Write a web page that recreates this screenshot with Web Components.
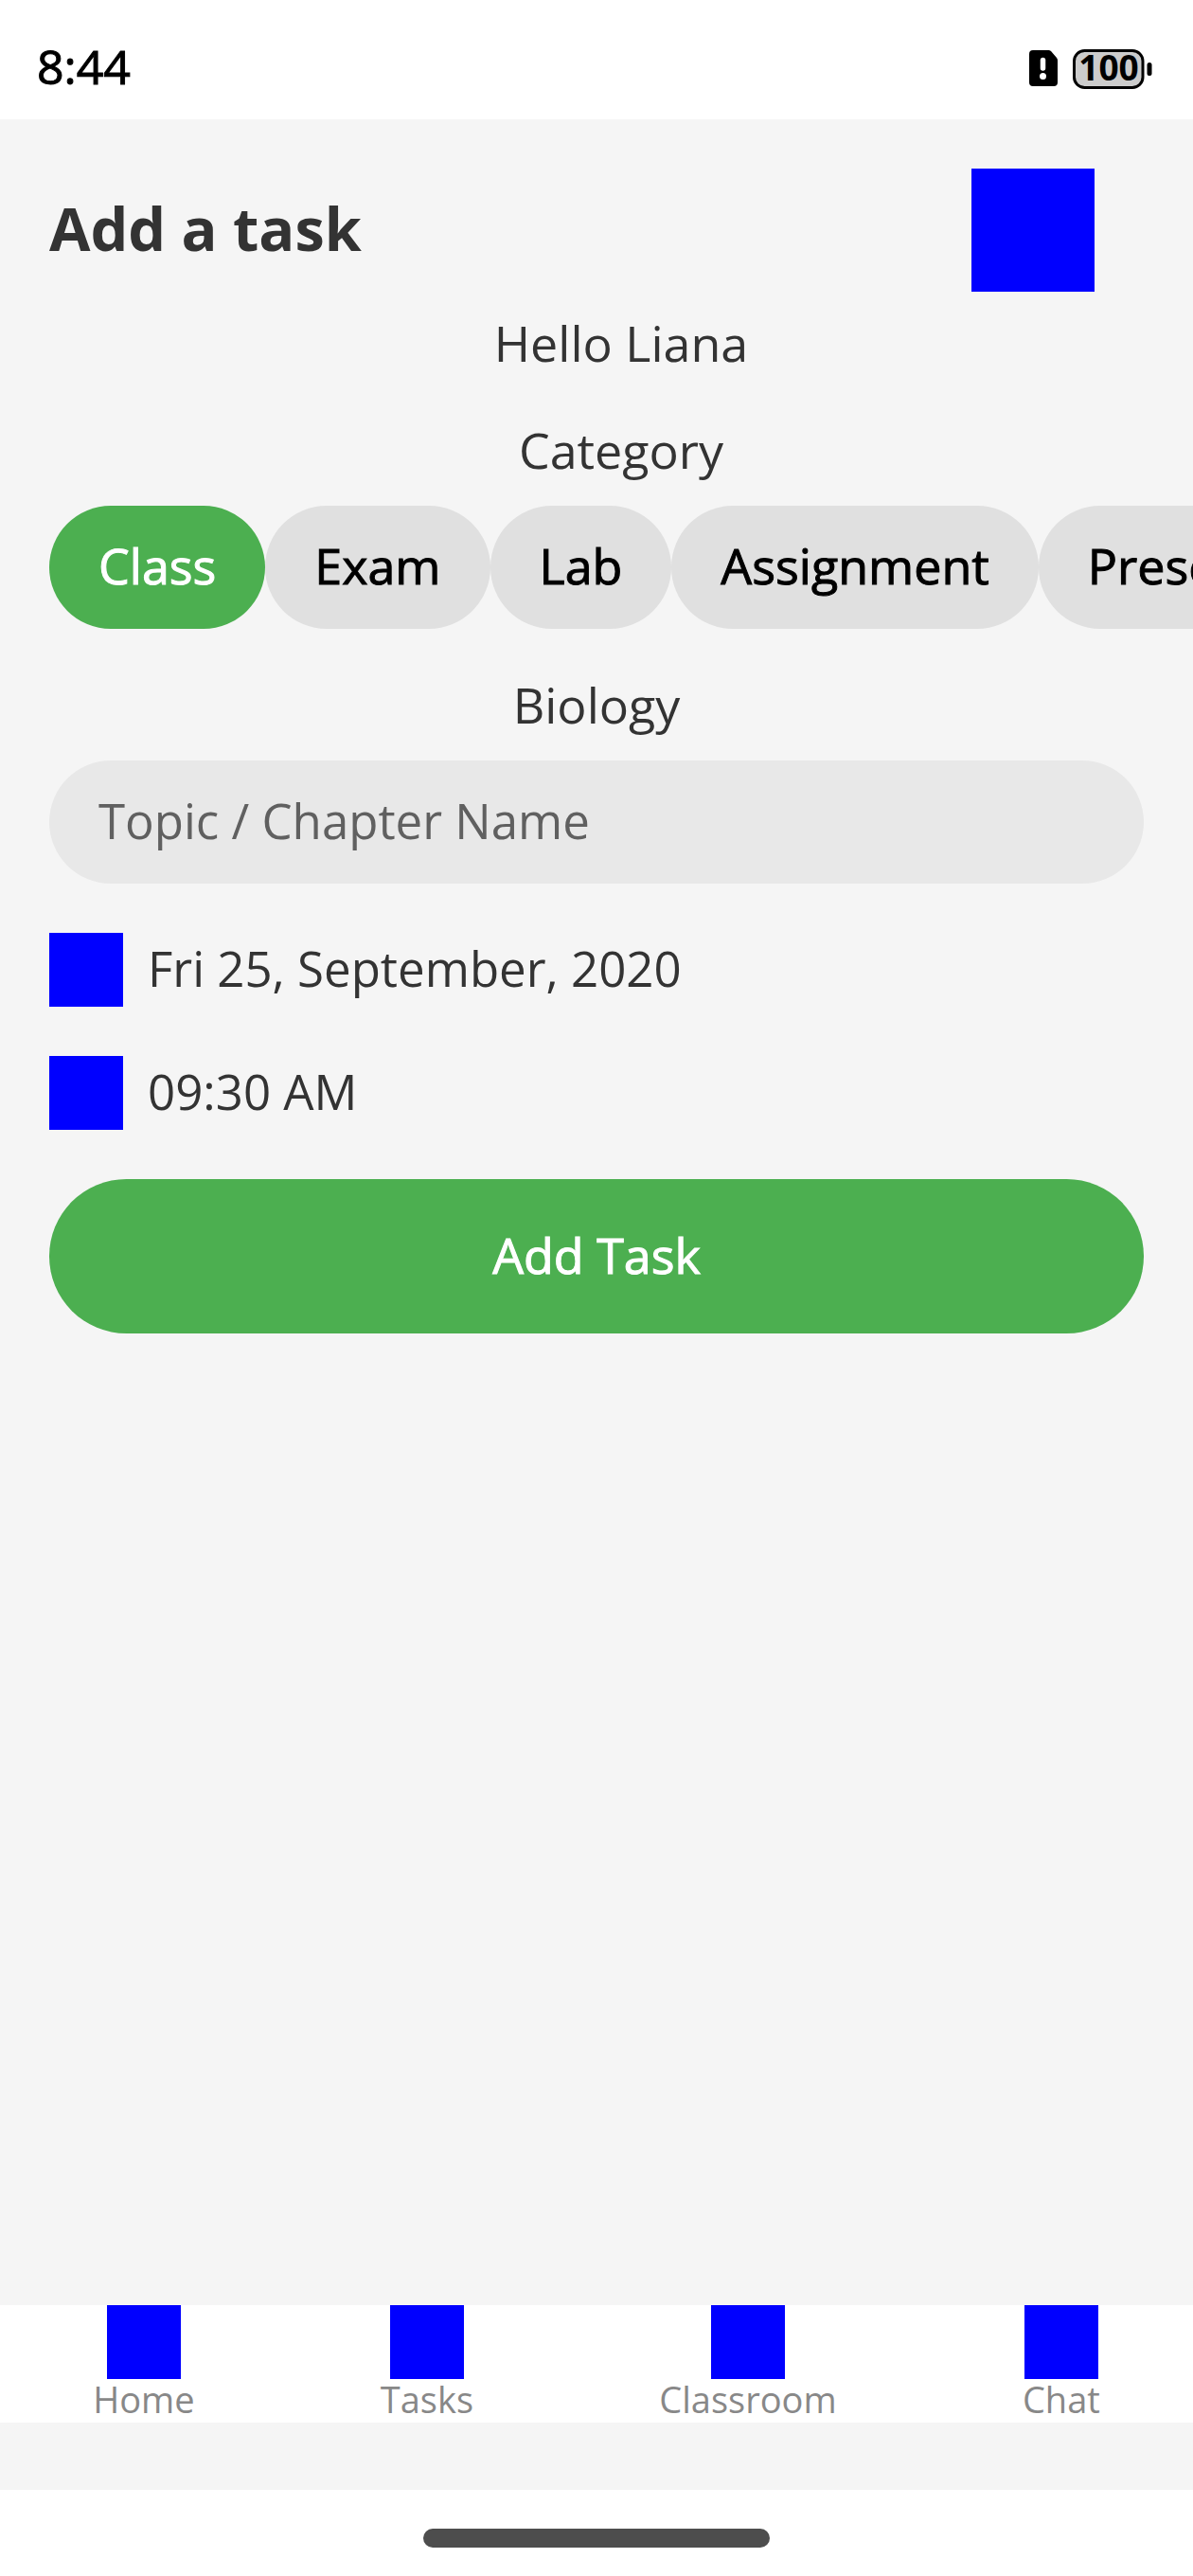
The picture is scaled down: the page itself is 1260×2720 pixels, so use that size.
<!DOCTYPE html>
<html lang="en">
<head>
<meta charset="utf-8">
<meta name="viewport" content="width=device-width, initial-scale=1">
<title>Add a task</title>
<style>
  html, body { margin: 0; height: 100%; }
  body { background: #fff; color: #333; font-family: "Open Sans", "Noto Sans", sans-serif; }
</style>
</head>
<body>
<task-screen></task-screen>

<template id="status-bar">
  <style>
    :host { display: flex; align-items: center; justify-content: space-between; box-sizing: border-box; height: 126px; padding: 20px 43px 0 39px; background: #fff; color: #000; }
    time { font-size: 50px; line-height: 56px; padding-bottom: 6px; -webkit-text-stroke: 1px; }
    svg { display: block; width: 130px; height: 42px; }
    text { font-family: "Open Sans", sans-serif; font-size: 37px; font-weight: 700; }
  </style>
  <time datetime="08:44">8:44</time>
  <svg viewBox="0 0 130 42" role="img" aria-label="SIM alert, battery 100">
    <path d="M4 1H20a4 4 0 0 1 3 1L29 9a4 4 0 0 1 1 3V35a4 4 0 0 1-4 4H4a4 4 0 0 1-4-4V5a4 4 0 0 1 4-4Z"/>
    <path d="M14.500 11.500V20" stroke="#fff" stroke-width="5.500" stroke-linecap="round"/>
    <circle cx="14.500" cy="28.500" r="3.500" fill="#fff"/>
    <rect x="47.500" y="1.500" width="72.500" height="39" rx="11" fill="#ccc" stroke="#000" stroke-width="3"/>
    <rect x="124.500" y="14" width="5" height="14" rx="2.500"/>
    <text x="84" y="33" text-anchor="middle">100</text>
  </svg>
</template>

<template id="image-block">
  <style>
    :host { display: block; flex: none; width: 78px; height: 78px; background: #00f; }
    :host([large]) { width: 130px; height: 130px; }
  </style>
</template>

<template id="page-header">
  <style>
    :host { display: flex; align-items: center; justify-content: space-between; padding-right: 52px; }
    h1 { margin: 0; padding-bottom: 4px; font-size: 63px; line-height: 72px; font-weight: 700; }
  </style>
  <h1><slot></slot></h1>
  <image-block large></image-block>
</template>

<template id="category-chip">
  <style>
    :host { display: block; flex: none; }
    button { display: block; height: 130px; padding: 0 52px 5px; border: 0; border-radius: 65px; background: #e0e0e0; color: #000; font: inherit; font-size: 52px; white-space: nowrap; -webkit-text-stroke: 1px; }
    :host([selected]) button { background: #4caf50; color: #fff; }
  </style>
  <button type="button"><slot></slot></button>
</template>

<template id="category-picker">
  <style>
    :host { display: block; }
    h2 { margin: 0 0 31px; padding-left: 52px; font-size: 52px; line-height: 56px; font-weight: 400; text-align: center; }
    .chips { display: flex; margin-right: -52px; overflow: hidden; }
  </style>
  <h2 id="title">Category</h2>
  <div class="chips" role="group" aria-labelledby="title"><slot></slot></div>
</template>

<template id="topic-field">
  <style>
    :host { display: flex; flex-direction: column; gap: 31px; }
    label { font-size: 52px; line-height: 56px; text-align: center; }
    input { box-sizing: border-box; width: 100%; height: 130px; padding: 0 52px 5px; border: 0; border-radius: 65px; background: #e8e8e8; color: #333; font: inherit; font-size: 51px; }
    input::placeholder { color: #606060; opacity: 1; }
  </style>
  <label for="topic"><slot></slot></label>
  <input id="topic" type="text" placeholder="Topic / Chapter Name">
</template>

<template id="detail-row">
  <style>
    :host { display: flex; align-items: center; gap: 26px; font-size: 51px; line-height: 56px; }
    span { padding-bottom: 5px; }
  </style>
  <image-block></image-block>
  <span><slot></slot></span>
</template>

<template id="submit-button">
  <style>
    :host { display: block; }
    button { display: block; width: 100%; height: 163px; padding: 0 52px 5px; border: 0; border-radius: 82px; background: #4caf50; color: #fff; font: inherit; font-size: 52px; -webkit-text-stroke: 1px; }
  </style>
  <button type="submit"><slot></slot></button>
</template>

<template id="nav-item">
  <style>
    :host { display: block; }
    a { display: flex; flex-direction: column; align-items: center; padding-bottom: 4px; color: #888; font-size: 38px; line-height: 42px; text-decoration: none; }
  </style>
  <a href="#"><image-block></image-block><slot></slot></a>
</template>

<template id="bottom-nav">
  <style>
    :host { display: block; }
    nav { display: flex; justify-content: space-around; background: #fff; }
  </style>
  <nav><slot></slot></nav>
</template>

<template id="home-indicator">
  <style>
    :host { display: flex; align-items: center; justify-content: center; height: 91px; padding-top: 10px; box-sizing: border-box; background: #fff; }
    i { display: block; width: 29%; height: 20px; border-radius: 10px; background: #4d4d4d; }
  </style>
  <i></i>
</template>

<template id="task-screen">
  <style>
    :host { display: flex; flex-direction: column; min-height: 100vh; background: #f5f5f5; overflow: hidden; }
    main { flex: 1; padding: 52px; }
    form { display: flex; flex-direction: column; gap: 52px; }
    .greeting { margin: 26px 0 57px; padding-left: 52px; font-size: 52px; line-height: 56px; text-align: center; }
    bottom-nav { margin-bottom: 71px; }
  </style>
  <status-bar></status-bar>
  <main>
    <page-header>Add a task</page-header>
    <p class="greeting">Hello Liana</p>
    <form>
      <category-picker>
        <category-chip selected>Class</category-chip>
        <category-chip>Exam</category-chip>
        <category-chip>Lab</category-chip>
        <category-chip>Assignment</category-chip>
        <category-chip>Presentation</category-chip>
      </category-picker>
      <topic-field>Biology</topic-field>
      <detail-row>Fri 25, September, 2020</detail-row>
      <detail-row>09:30 AM</detail-row>
      <submit-button>Add Task</submit-button>
    </form>
  </main>
  <bottom-nav>
    <nav-item>Home</nav-item>
    <nav-item>Tasks</nav-item>
    <nav-item>Classroom</nav-item>
    <nav-item>Chat</nav-item>
  </bottom-nav>
  <home-indicator></home-indicator>
</template>

<script>
  class TemplateElement extends HTMLElement {
    constructor() {
      super();
      const template = document.getElementById(this.localName);
      this.attachShadow({ mode: 'open' }).append(template.content.cloneNode(true));
    }
  }

  class CategoryChip extends TemplateElement {
    static observedAttributes = ['selected'];
    attributeChangedCallback() { this.sync(); }
    connectedCallback() { this.sync(); }
    sync() {
      this.shadowRoot.querySelector('button').setAttribute('aria-pressed', this.hasAttribute('selected'));
    }
  }

  class CategoryPicker extends TemplateElement {
    connectedCallback() {
      this.addEventListener('click', (event) => {
        const chip = event.target.closest('category-chip');
        if (!chip) return;
        for (const other of this.children) other.toggleAttribute('selected', other === chip);
      });
    }
  }

  customElements.define('image-block', class extends TemplateElement {});
  customElements.define('status-bar', class extends TemplateElement {});
  customElements.define('page-header', class extends TemplateElement {});
  customElements.define('category-chip', CategoryChip);
  customElements.define('category-picker', CategoryPicker);
  customElements.define('topic-field', class extends TemplateElement {});
  customElements.define('detail-row', class extends TemplateElement {});
  customElements.define('submit-button', class extends TemplateElement {});
  customElements.define('nav-item', class extends TemplateElement {});
  customElements.define('bottom-nav', class extends TemplateElement {});
  customElements.define('home-indicator', class extends TemplateElement {});
  customElements.define('task-screen', class extends TemplateElement {});
</script>
</body>
</html>
